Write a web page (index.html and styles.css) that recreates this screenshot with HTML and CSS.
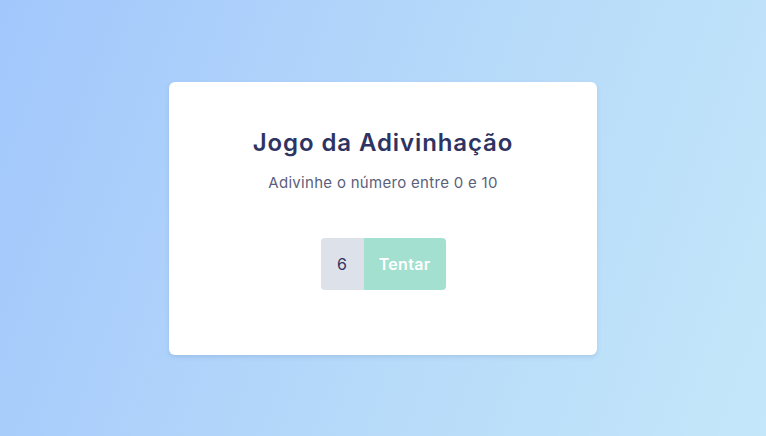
FILE: index.html
```html
<!DOCTYPE html>
<html lang="pt">
<head>
<meta charset="utf-8">
<link rel="stylesheet" href="styles.css">
</head>
<body>
<main class="page">
  <section class="card">
    <h1 class="title">Jogo da Adivinhação</h1>
    <p class="subtitle">Adivinhe o número entre 0 e 10</p>
    <form class="guess">
      <input class="guess-input" type="text" value="6">
      <button class="guess-btn" type="button">Tentar</button>
    </form>
  </section>
</main>
</body>
</html>
```
FILE: styles.css
```css
html, body { margin: 0; padding: 0; }
body {
  width: 766px;
  height: 436px;
  background: linear-gradient(110deg, #a2c7fc 0%, #b6daf9 55%, #c4e7fa 100%);
  font-family: Inter, "Noto Sans", sans-serif;
}
.page {
  height: 100%;
  display: flex;
  align-items: center;
  justify-content: center;
}
.card {
  width: 428px;
  height: 273px;
  box-sizing: border-box;
  background: #fff;
  border-radius: 6px;
  box-shadow: 0 2px 4px rgba(60, 90, 140, 0.15);
  display: flex;
  flex-direction: column;
  align-items: center;
  padding-top: 46px;
}
.title {
  margin: 0;
  font-family: Inter, sans-serif;
  font-weight: 600;
  font-size: 24px;
  line-height: 30px;
  color: #2e3461;
  letter-spacing: 0.9px;
}
.subtitle {
  margin: 15px 0 0;
  font-family: Inter, sans-serif;
  font-size: 15px;
  line-height: 20px;
  color: #5b5f7c;
  letter-spacing: 0.3px;
}
.guess {
  margin-top: 45px;
  display: flex;
}
.guess-input {
  width: 43px;
  height: 52px;
  box-sizing: border-box;
  border: none;
  margin: 0;
  padding: 0;
  background: #dce1ea;
  border-radius: 4px 0 0 4px;
  text-align: center;
  font-family: Inter, sans-serif;
  font-size: 16px;
  color: #2e3461;
  outline: none;
}
.guess-btn {
  width: 82px;
  height: 52px;
  border: none;
  margin: 0;
  padding: 0;
  background: #a4e0cf;
  border-radius: 0 4px 4px 0;
  color: #fff;
  font-family: Inter, sans-serif;
  font-weight: 600;
  font-size: 16px;
  letter-spacing: 0.3px;
}
```
